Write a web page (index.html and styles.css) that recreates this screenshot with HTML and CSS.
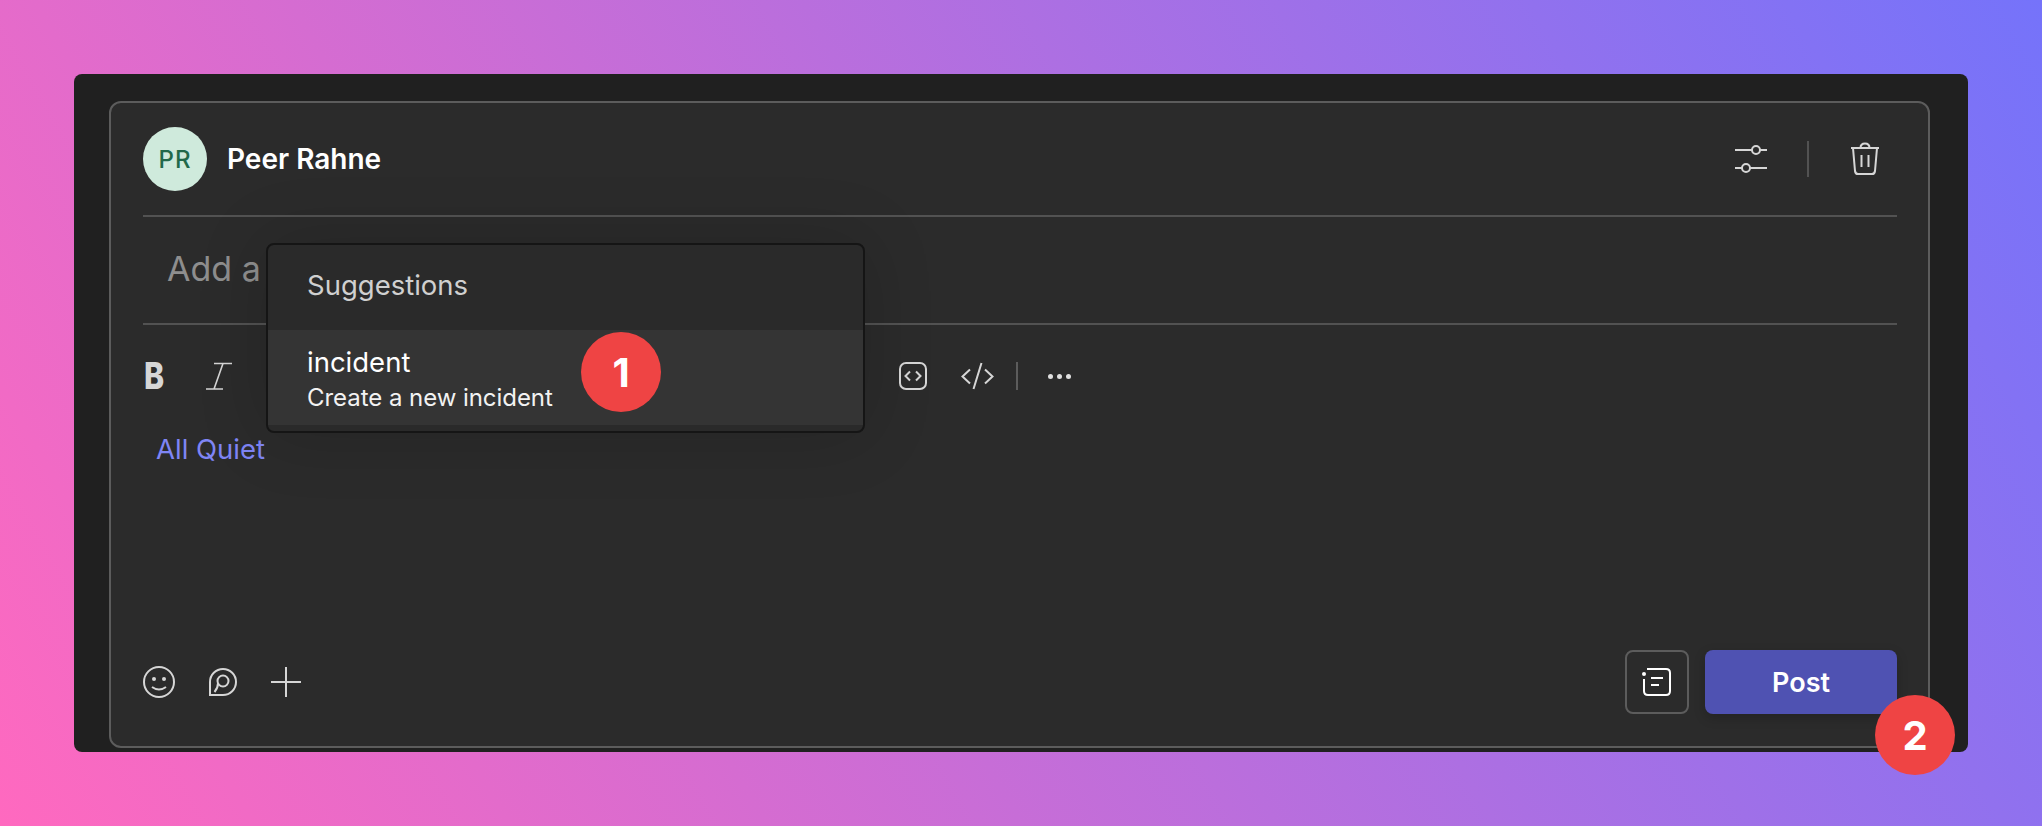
FILE: index.html
```html
<!DOCTYPE html>
<html lang="en">
<head>
<meta charset="UTF-8" />
<title>Compose post</title>
<link rel="stylesheet" href="styles.css">
</head>
<body>
<div class="panel">
  <div class="card">
    <div class="head">
      <div class="avatar">PR</div>
      <div class="name">Peer Rahne</div>
      <div class="head-actions">
        <svg class="ico" width="32" height="36" viewBox="0 0 32 36"><path d="M0 9H17M25 9H32M0 27H7M15 27H32"/><circle cx="21" cy="9" r="4"/><circle cx="11" cy="27" r="4"/></svg>
        <span class="head-sep"></span>
        <svg class="ico" width="30" height="34" viewBox="0 0 30 34"><path d="M1 6H29M3 6L5 29Q5.4 32 8 32H22Q24.6 32 25 29L27 6M10.500 6Q10.500 1.500 15 1.500T19.500 6M11.500 13V25M18.500 13V25"/></svg>
      </div>
    </div>

    <div class="subject">Add a</div>

    <div class="toolbar">
      <span class="tool-b">B</span>
      <svg class="ico tool-i" width="26" height="28" viewBox="0 0 26 28"><path d="M8 1.500H26M0 27H17M17 1.500L8 27" stroke-width="1.600"/></svg>
      <div class="covered"></div>
      <svg class="ico" width="28" height="28" viewBox="0 0 28 28"><rect x="1" y="1" width="26" height="26" rx="6"/><path d="M11 9.500L6.500 14L11 18.500M17 9.500L21.500 14L17 18.500"/></svg>
      <svg class="ico code" width="33" height="28" viewBox="0 0 33 28"><path d="M9 7.500L1.500 14.500L9 21.500M24 7.500L31.500 14.500L24 21.500M20.500 1L12.500 27"/></svg>
      <span class="tool-sep"></span>
      <span class="dots"><i></i><i></i><i></i></span>
    </div>

    <a class="link">All Quiet</a>

    <div class="foot">
      <svg class="ico" width="32" height="32" viewBox="0 0 32 32"><circle cx="16" cy="16" r="15"/><circle class="fill" cx="11" cy="13" r="2"/><circle class="fill" cx="21" cy="13" r="2"/><path d="M9 21Q16 26 23 21"/></svg>
      <svg class="ico" width="28" height="28" viewBox="0 0 28 28"><path d="M1 27V14A13 13 0 1 1 14 27Z"/><circle cx="14" cy="13" r="5.500"/><path d="M9 15Q9 20 5.500 24"/></svg>
      <svg class="ico" width="30" height="30" viewBox="0 0 30 30"><path d="M15 0V30M0 15H30"/></svg>
      <div class="foot-right">
        <button class="note-btn"><svg class="ico note" width="30" height="30" viewBox="0 0 30 30"><path d="M5 2H24Q28 2 28 6V24Q28 28 24 28H6Q2 28 2 24V12"/><circle class="fill" cx="2" cy="7" r="2"/><path d="M9 11H21M9 18H17"/></svg></button>
        <button class="post-btn">Post</button>
      </div>
    </div>
  </div>

  <div class="popover">
    <div class="pop-title">Suggestions</div>
    <div class="pop-row">
      <div class="pop-main">incident</div>
      <div class="pop-sub">Create a new incident</div>
    </div>
  </div>

  <div class="badge badge1">1</div>
  <div class="badge badge2">2</div>
</div>
</body>
</html>
```

FILE: styles.css
```css
* { box-sizing: border-box; }
html, body {
  margin: 0;
  height: 100%;
  overflow: hidden;
}
body {
  background: linear-gradient(60deg, #ff69bf 0%, #7573fa 100%);
  font-family: Inter, 'Liberation Sans', sans-serif;
  padding: 74px;
}
.panel {
  position: relative;
  height: 678px;
  background: #202020;
  border-radius: 8px;
  padding: 27px 38px 4px 35px;
  display: flex;
}
.card {
  flex: 1;
  display: flex;
  flex-direction: column;
  background: #2b2b2b;
  border: 2px solid #5c5c5c;
  border-radius: 12px;
  padding: 24px 31px 32px 32px;
}

/* icons */
.ico {
  display: block;
  flex: none;
  fill: none;
  stroke: #d6d6d6;
  stroke-width: 2;
}
.ico .fill { fill: #d6d6d6; stroke: none; }
.note { stroke: #fff; }
.note .fill { fill: #fff; }

/* header */
.head {
  display: flex;
  align-items: center;
  padding-bottom: 24px;
  border-bottom: 2px solid #525252;
}
.avatar {
  width: 64px;
  height: 64px;
  border-radius: 50%;
  background: #cfeadc;
  color: #22694a;
  font-size: 24px;
  font-weight: 500;
  letter-spacing: 1px;
  display: flex;
  align-items: center;
  justify-content: center;
}
.name {
  margin-left: 20px;
  color: #fff;
  font-size: 28px;
  font-weight: 600;
}
.head-actions {
  margin-left: auto;
  padding-right: 17px;
  display: flex;
  align-items: center;
}
.head-sep {
  width: 2px;
  height: 36px;
  background: #525252;
  margin: 0 41px 0 40px;
}

/* subject */
.subject {
  height: 108px;
  padding: 29px 0 0 24px;
  border-bottom: 2px solid #525252;
  color: #8e8e8e;
  font-size: 34px;
  line-height: 46px;
}

/* toolbar */
.toolbar {
  display: flex;
  align-items: center;
  height: 28px;
  margin-top: 37px;
}
.tool-b {
  width: 22px;
  margin-left: 1px;
  color: #d6d6d6;
  font-size: 37px;
  font-weight: 800;
  line-height: 28px;
  transform: scaleX(0.82);
  transform-origin: left center;
}
.tool-i { margin-left: 40px; }
.covered { width: 667px; flex: none; }
.code { margin-left: 34px; }
.tool-sep {
  width: 2px;
  height: 28px;
  margin-left: 22px;
  background: #5c5c5c;
}
.dots {
  display: flex;
  gap: 4px;
  margin-left: 30px;
}
.dots i {
  width: 5px;
  height: 5px;
  border-radius: 50%;
  background: #e0e0e0;
}

.link {
  margin: 41px 0 0 13px;
  color: #7f85f5;
  font-size: 27.500px;
  line-height: 36px;
  align-self: flex-start;
}

/* footer */
.foot {
  margin-top: auto;
  display: flex;
  align-items: center;
  gap: 34px;
}
.foot-right {
  margin-left: auto;
  display: flex;
  gap: 16px;
}
.note-btn {
  width: 64px;
  height: 64px;
  padding: 0;
  background: transparent;
  border: 2px solid #5c5c5c;
  border-radius: 8px;
  display: flex;
  align-items: center;
  justify-content: center;
}
.post-btn {
  width: 192px;
  height: 64px;
  border: 0;
  border-radius: 8px;
  background: #4f52b2;
  color: #fff;
  font-family: inherit;
  font-size: 27px;
  font-weight: 600;
  box-shadow: 0 4px 12px rgba(0,0,0,0.18);
}

/* suggestions popover */
.popover {
  position: absolute;
  left: 192px;
  top: 169px;
  width: 599px;
  height: 190px;
  padding-bottom: 6px;
  background: #2a2a2a;
  border: 2px solid #151515;
  border-radius: 8px;
  box-shadow: 0 0 70px rgba(0,0,0,0.16);
  overflow: hidden;
  display: flex;
  flex-direction: column;
}
.pop-title {
  height: 85px;
  padding: 22px 0 0 39px;
  color: #d0d0d0;
  font-size: 27.500px;
  line-height: 36px;
}
.pop-row {
  flex: 1;
  background: #343434;
  padding: 14px 0 0 39px;
}
.pop-main {
  color: #fff;
  font-size: 27.500px;
  line-height: 36px;
}
.pop-sub {
  color: #f2f2f2;
  font-size: 24px;
  line-height: 34px;
  letter-spacing: -0.05px;
  padding-top: 1px;
}

/* numbered callouts */
.badge {
  position: absolute;
  width: 80px;
  height: 80px;
  border-radius: 50%;
  background: #ef4444;
  color: #fff;
  font-size: 40px;
  font-weight: 700;
  display: flex;
  align-items: center;
  justify-content: center;
}
.badge1 { left: 507px; top: 258px; }
.badge2 { left: 1801px; top: 621px; }
```
